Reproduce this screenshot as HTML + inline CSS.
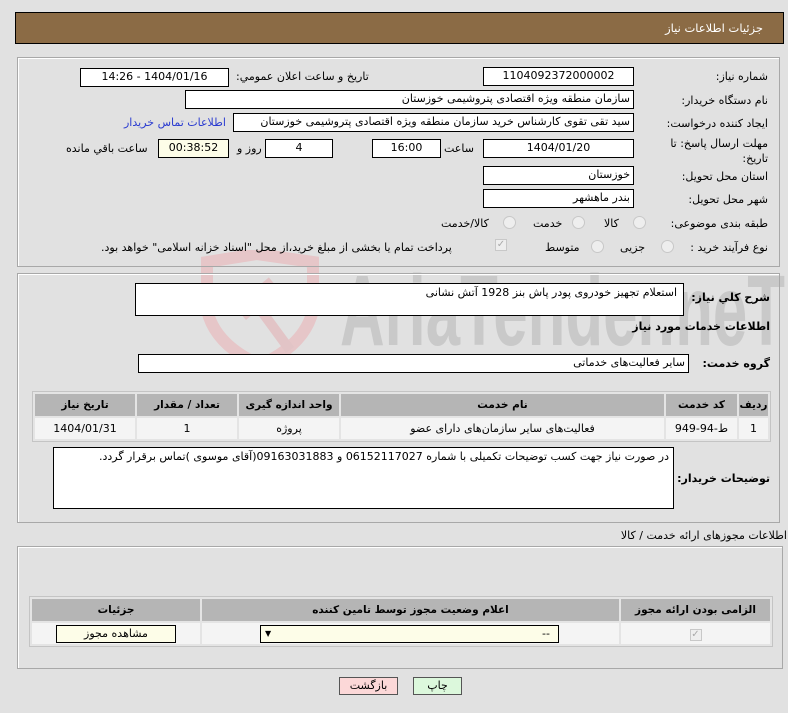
<!DOCTYPE html>
<html><head><meta charset="utf-8">
<style>
*{margin:0;padding:0;box-sizing:border-box}
body{width:788px;height:713px;background:#e1e1e1;font-family:"DejaVu Sans",sans-serif;font-size:10.5px;color:#000;position:relative;overflow:hidden;direction:rtl}
.a{position:absolute;white-space:nowrap}
.box{position:absolute;background:#fff;border:1px solid #000;padding:0 3px;line-height:16px;font-size:11px;white-space:nowrap;overflow:hidden}
.c{text-align:center}
.lbl{position:absolute;white-space:nowrap;font-size:11px}
.b{font-weight:bold;font-size:11px}
.panel{position:absolute;border:1px solid #a8a8a8;box-shadow:inset 1px 1px 0 #fff}
table{position:absolute;border-collapse:separate;border-spacing:2px;background:#e4e4e4;border:1px solid #c4c4c4}
th{background:#b5b5b5;font-weight:bold;font-size:10.5px;height:22px}
td{background:#f4f4f4;text-align:center;font-size:11px;height:21px}
.radio{position:absolute;width:13px;height:13px;border-radius:50%;border:1px solid #c8c8c8;background:#eee}
</style></head><body>

<svg class="a" style="left:195px;top:250px" width="600" height="110" viewBox="0 0 600 110">
<path d="M12 12 L62 4 L118 12 L118 60 Q110 95 65 115 Q20 95 12 60 Z" fill="none" stroke="#e6c6c8" stroke-width="12"/>
<rect x="40" y="40" width="45" height="18" fill="#e2c4c6" transform="rotate(-40 62 49)"/>
<line x1="62" y1="55" x2="95" y2="100" stroke="#e2c4c6" stroke-width="10"/>
<text x="145" y="95" font-family="Liberation Sans" font-weight="bold" font-size="100" fill="#c9c9c9" textLength="445" lengthAdjust="spacingAndGlyphs" direction="ltr">AriaTender.neT</text>
</svg>

<div class="a" style="left:15px;top:12px;width:769px;height:32px;background:#8b6b45;border:1px solid #000"></div>
<div class="a" style="right:25px;top:21px;color:#fff;font-size:11.5px">جزئیات اطلاعات نیاز</div>

<div class="panel" style="left:17px;top:57px;width:763px;height:210px"></div>
<div class="lbl" style="right:20px;top:70px">شماره نیاز:</div>
<div class="box c" style="left:483px;top:67px;width:151px;height:19px">1104092372000002</div>
<div class="lbl" style="left:236px;top:70px">تاریخ و ساعت اعلان عمومي:</div>
<div class="box c" style="left:80px;top:68px;width:149px;height:19px">1404/01/16 - 14:26</div>

<div class="lbl" style="right:20px;top:94px">نام دستگاه خریدار:</div>
<div class="box" style="left:185px;top:90px;width:449px;height:19px">سازمان منطقه ویژه اقتصادی پتروشیمی خوزستان</div>

<div class="lbl" style="right:20px;top:117px">ایجاد کننده درخواست:</div>
<div class="box" style="left:233px;top:113px;width:401px;height:19px">سید تقی تقوی کارشناس خرید سازمان منطقه ویژه اقتصادی پتروشیمی خوزستان</div>
<div class="lbl" style="left:124px;top:116px;color:#2a3bd0">اطلاعات تماس خریدار</div>

<div class="lbl" style="right:20px;top:136px;line-height:15px;white-space:normal;width:110px">مهلت ارسال پاسخ: تا تاریخ:</div>
<div class="box c" style="left:483px;top:139px;width:151px;height:19px">1404/01/20</div>
<div class="lbl" style="left:444px;top:142px">ساعت</div>
<div class="box c" style="left:372px;top:139px;width:69px;height:19px">16:00</div>
<div class="box c" style="left:265px;top:139px;width:68px;height:19px">4</div>
<div class="lbl" style="left:237px;top:142px">روز و</div>
<div class="box c" style="left:158px;top:139px;width:71px;height:19px;background:#fdfde8">00:38:52</div>
<div class="lbl" style="left:66px;top:142px">ساعت باقي مانده</div>

<div class="lbl" style="right:20px;top:170px">استان محل تحویل:</div>
<div class="box" style="left:483px;top:166px;width:151px;height:19px">خوزستان</div>
<div class="lbl" style="right:20px;top:193px">شهر محل تحویل:</div>
<div class="box" style="left:483px;top:189px;width:151px;height:19px">بندر ماهشهر</div>

<div class="lbl" style="right:20px;top:217px">طبقه بندی موضوعی:</div>
<div class="radio" style="left:633px;top:216px"></div><div class="lbl" style="left:604px;top:217px">کالا</div>
<div class="radio" style="left:572px;top:216px"></div><div class="lbl" style="left:533px;top:217px">خدمت</div>
<div class="radio" style="left:503px;top:216px"></div><div class="lbl" style="left:441px;top:217px">کالا/خدمت</div>

<div class="lbl" style="right:20px;top:241px">نوع فرآیند خرید :</div>
<div class="radio" style="left:661px;top:240px"></div><div class="lbl" style="left:620px;top:241px">جزیی</div>
<div class="radio" style="left:591px;top:240px"></div><div class="lbl" style="left:545px;top:241px">متوسط</div>
<div class="a" style="left:495px;top:239px;width:12px;height:12px;border:1px solid #c8c8c8;background:#eee;color:#aaa;font-size:10px;line-height:10px;text-align:center">✓</div>
<div class="lbl" style="left:101px;top:241px">پرداخت تمام یا بخشی از مبلغ خرید،از محل "اسناد خزانه اسلامی" خواهد بود.</div>

<div class="panel" style="left:17px;top:273px;width:763px;height:250px"></div>
<div class="lbl b" style="right:18px;top:291px">شرح کلي نیاز:</div>
<div class="box" style="left:135px;top:283px;width:549px;height:33px;line-height:18px;padding-right:6px">استعلام تجهیز خودروی پودر پاش بنز 1928 آتش نشانی</div>
<div class="lbl b" style="right:18px;top:320px">اطلاعات خدمات مورد نیاز</div>
<div class="lbl b" style="right:18px;top:357px">گروه خدمت:</div>
<div class="box" style="left:138px;top:354px;width:551px;height:19px">سایر فعالیت‌های خدماتی</div>

<table style="left:32px;top:391px;width:739px">
<tr><th style="width:29px">ردیف</th><th style="width:71px">کد خدمت</th><th>نام خدمت</th><th style="width:100px">واحد اندازه گیری</th><th style="width:100px">تعداد / مقدار</th><th style="width:100px">تاریخ نیاز</th></tr>
<tr><td>1</td><td>ط-94-949</td><td>فعالیت‌های سایر سازمان‌های دارای عضو</td><td>پروژه</td><td>1</td><td>1404/01/31</td></tr>
</table>

<div class="lbl b" style="right:18px;top:472px">توضیحات خریدار:</div>
<div class="box" style="left:53px;top:447px;width:621px;height:62px;line-height:18px;padding-right:4px">در صورت نیاز جهت کسب توضیحات تکمیلی با شماره 06152117027 و 09163031883(آقای موسوی )تماس برقرار گردد.</div>

<div class="lbl" style="right:1px;top:529px">اطلاعات مجوزهای ارائه خدمت / کالا</div>
<div class="panel" style="left:17px;top:546px;width:766px;height:123px"></div>
<table style="left:29px;top:596px;width:744px">
<tr><th style="width:149px">الزامی بودن ارائه مجوز</th><th>اعلام وضعیت مجوز توسط تامین کننده</th><th style="width:168px">جزئیات</th></tr>
<tr><td><span style="display:inline-block;width:12px;height:12px;border:1px solid #c8c8c8;background:#eee;color:#aaa;font-size:10px;line-height:10px">✓</span></td>
<td style="position:relative"><div style="position:absolute;left:58px;top:2px;width:299px;height:18px;border:1px solid #000;background:#fdfde8;font-size:11px;line-height:16px;text-align:right;padding-right:8px">--<span style="position:absolute;left:4px;top:0;font-size:8px">▼</span></div></td>
<td style="position:relative"><div style="position:absolute;left:24px;top:2px;width:120px;height:18px;border:1px solid #000;background:#fdfde8;line-height:16px">مشاهده مجوز</div></td></tr>
</table>

<div class="a c" style="left:339px;top:677px;width:59px;height:18px;border:1px solid #555;background:#fcd8d8;line-height:16px;font-size:11px">بازگشت</div>
<div class="a c" style="left:413px;top:677px;width:49px;height:18px;border:1px solid #555;background:#dcf8dc;line-height:16px;font-size:11px">چاپ</div>
</body></html>
